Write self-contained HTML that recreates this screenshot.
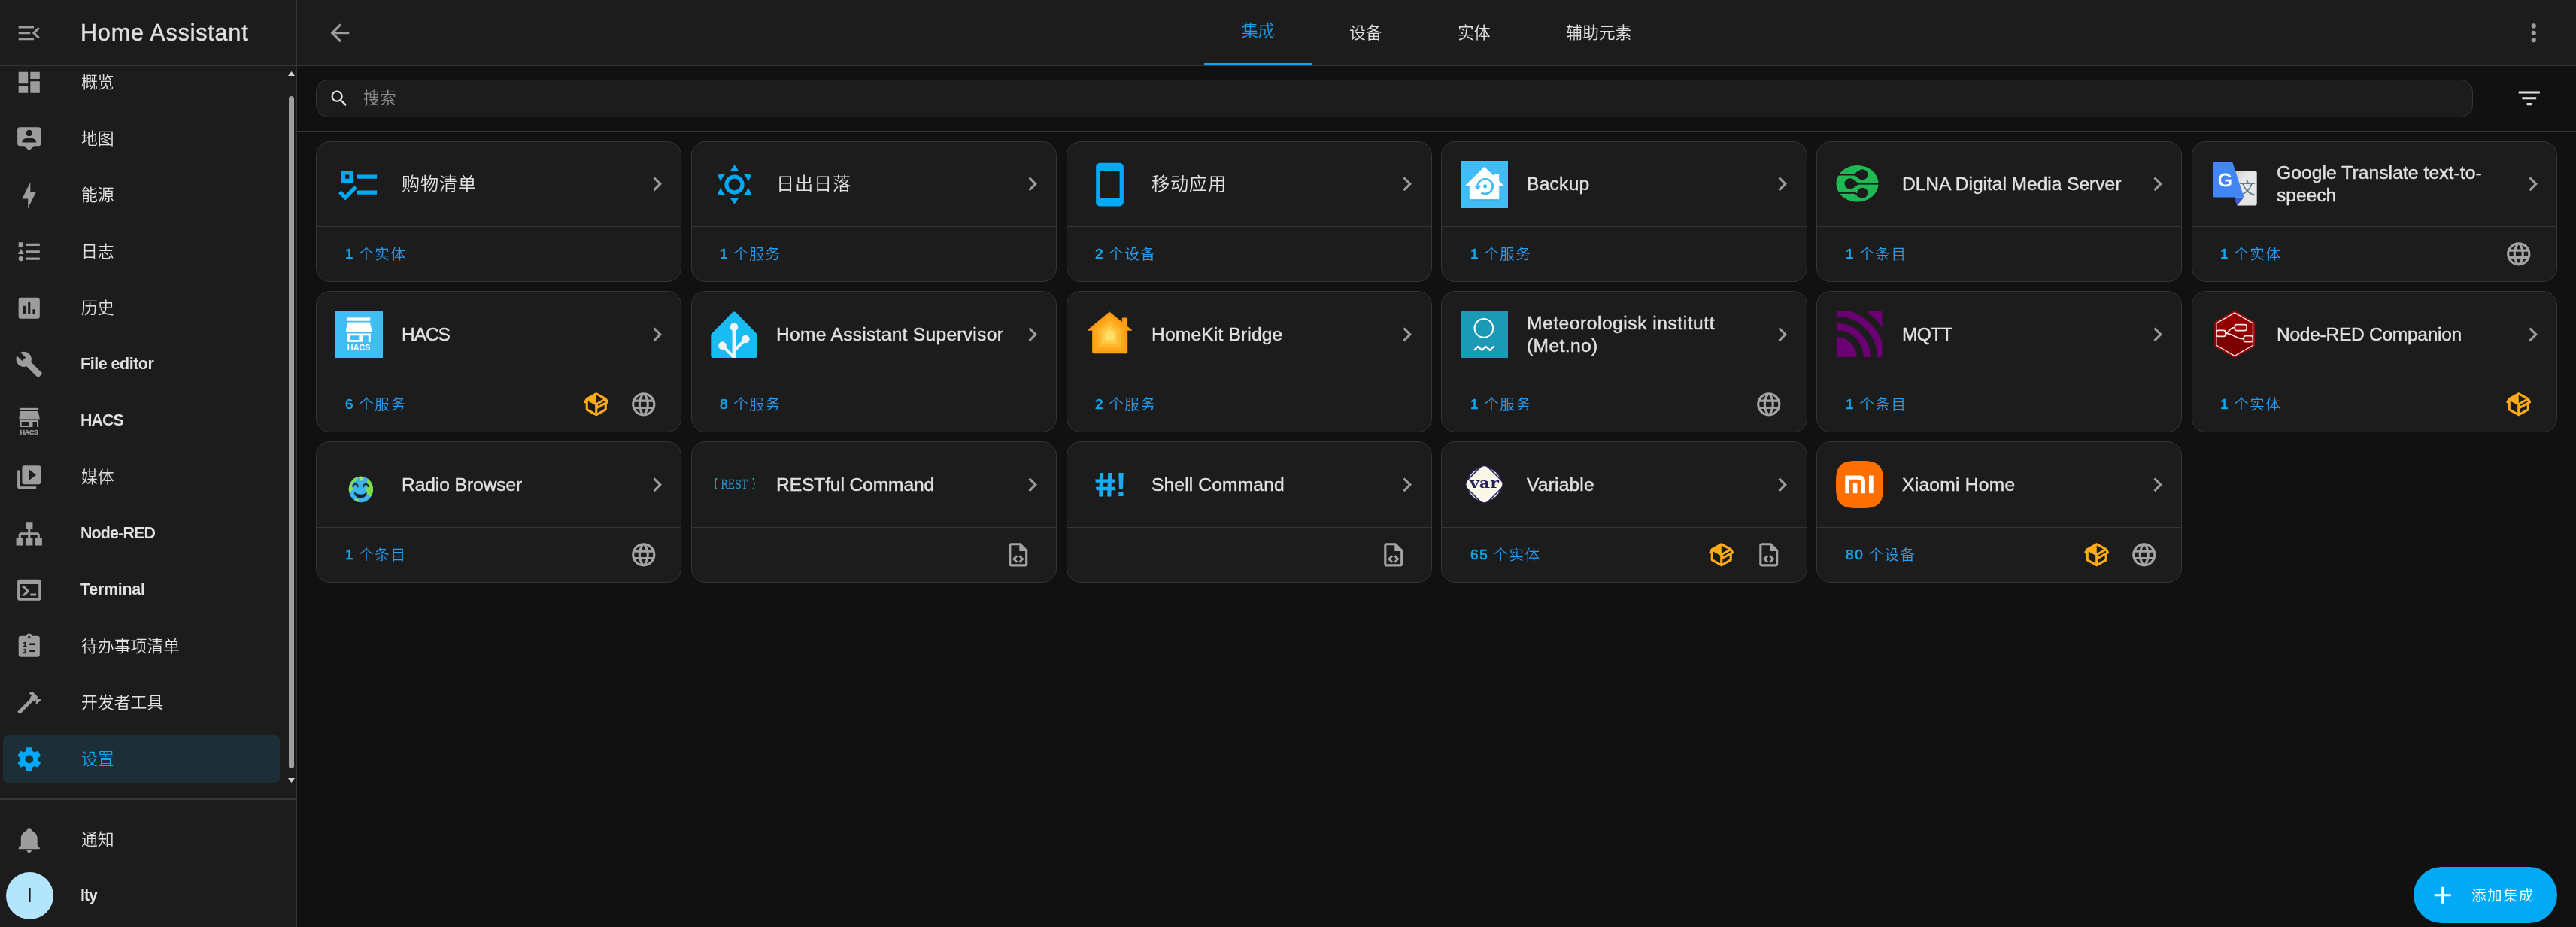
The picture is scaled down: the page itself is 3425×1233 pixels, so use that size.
<!DOCTYPE html><html lang="zh-CN"><head><meta charset="utf-8"><title>Home Assistant</title><style>
*{box-sizing:border-box;margin:0;padding:0}
html,body{width:3425px;height:1233px;overflow:hidden;background:#111111}
body{font-family:"Liberation Sans", "Noto Sans CJK SC", sans-serif;color:#e1e1e1;position:relative;font-weight:400}
.ic{position:absolute;display:block}
.lg{position:absolute;display:block;left:0;top:0}
.abs{position:absolute}
.ttl,.sbi,.cnt,.tab,.title,.ph,#fab span,.av,.logo,svg.tx{will-change:transform}
.cj{font-weight:350}
.md{-webkit-text-stroke:0.55px currentColor}
#sidebar{position:absolute;left:0;top:0;width:395px;height:1233px;background:#1c1c1c;border-right:1px solid #353535}
#sbhead{position:absolute;left:0;top:0;width:394px;height:88px;border-bottom:1px solid #353535}
.title{-webkit-text-stroke:0.4px currentColor;position:absolute;left:106.6px;top:0;height:87px;line-height:87px;font-size:30.6px;white-space:nowrap;color:#e1e1e1}
.sbi.b{font-weight:700;font-size:21.4px;margin-left:-0.7px}
.sbi{position:absolute;left:107.5px;height:62px;line-height:62px;font-size:21.875px;white-space:nowrap;color:#e1e1e1}
.sel{position:absolute;left:4px;top:978px;width:368px;height:63px;border-radius:6px;background:#1c2e36}
#header{position:absolute;left:395px;top:0;width:3030px;height:88px;background:#1c1c1c;border-bottom:1px solid #353535}
.tab{position:absolute;top:0;height:87px;line-height:87.6px;text-align:center;font-size:21.875px;color:#e1e1e1;white-space:nowrap}
.tab.act{color:#1b9fea;line-height:82.4px}
.tab.act:after{content:"";position:absolute;left:0;right:0.9px;bottom:0;height:3px;background:#0ca6f0}
#search{position:absolute;left:420px;top:106px;width:2868px;height:50px;border:1px solid #353535;border-radius:16px;background:#1c1c1c}
.ph{position:absolute;left:483px;top:107.2px;height:50px;line-height:48px;font-size:21.875px;color:#8c8c8c}
#hr{position:absolute;left:395px;top:174px;width:3030px;height:1px;background:#353535}
.card{position:absolute;border:1px solid #353535;border-radius:18.75px;background:#1c1c1c}
.div{position:absolute;height:1px;background:#353535}
.logo{position:absolute;width:63px;height:63px}
.ttl{position:absolute;font-size:24.6px;line-height:37.5px;height:37.5px;color:#e1e1e1;white-space:nowrap;-webkit-text-stroke:0.4px currentColor}
.ttl.cj{-webkit-text-stroke:0;font-size:24.2px;letter-spacing:0.8px}
.cnt{position:absolute;height:36px;line-height:36px;font-size:19.5px;letter-spacing:1.6px;word-spacing:-1px;color:#2a9cf0;white-space:nowrap}
.cnt .n{color:#12a8ee;font-size:19px;-webkit-text-stroke:0.65px currentColor;position:relative;top:-1px}
.cnt .u{position:relative;top:-0.3px}
#fab{position:absolute;left:3209px;top:1153px;width:191px;height:75px;border-radius:38px;background:#03a9f4}
#fab span{position:absolute;left:76.6px;top:1.4px;height:75px;line-height:75px;font-size:19.5px;letter-spacing:1.45px;color:#fff;white-space:nowrap}
</style></head><body>
<div id="sidebar">
<div id="sbhead">
<svg class="ic" style="left:19.75px;top:24.75px;width:37.5px;height:37.5px;" viewBox="0 0 24 24"><path fill="#9d9d9d" d="M21,15.61L19.59,17L14.58,12L19.59,7L21,8.39L17.44,12L21,15.61M3,6H16V8H3V6M3,13V11H13V13H3M3,18V16H16V18H3Z"/></svg>
<div class="title" style="letter-spacing:0.778px">Home Assistant</div>
</div>
<div class="sel"></div>
<svg class="ic" style="left:19.75px;top:90.85px;width:37.5px;height:37.5px;" viewBox="0 0 24 24"><path fill="#9d9d9d" d="M13,3V9H21V3M13,21H21V11H13M3,21H11V15H3M3,13H11V3H3V13Z"/></svg>
<div class="sbi cj" style="top:78.60px;">概览</div>
<svg class="ic" style="left:19.75px;top:165.85px;width:37.5px;height:37.5px;" viewBox="0 0 24 24"><path fill="#9d9d9d" d="M20,2H4A2,2 0 0,0 2,4V16A2,2 0 0,0 4,18H8L12,22L16,18H20A2,2 0 0,0 22,16V4A2,2 0 0,0 20,2M12,4.3C13.5,4.3 14.7,5.5 14.7,7C14.7,8.5 13.5,9.7 12,9.7C10.5,9.7 9.3,8.5 9.3,7C9.3,5.5 10.5,4.3 12,4.3M18,15H6V14.1C6,12.1 10,11 12,11C14,11 18,12.1 18,14.1V15Z"/></svg>
<div class="sbi cj" style="top:153.60px;">地图</div>
<svg class="ic" style="left:19.75px;top:240.85px;width:37.5px;height:37.5px;" viewBox="0 0 24 24"><path fill="#9d9d9d" d="M11,15H6L13,1V9H18L11,23V15Z"/></svg>
<div class="sbi cj" style="top:228.60px;">能源</div>
<svg class="ic" style="left:19.75px;top:315.85px;width:37.5px;height:37.5px;" viewBox="0 0 24 24"><path fill="#9d9d9d" d="M5,9.5L7.5,14H2.5L5,9.5M3,4H7V8H3V4M5,20A2,2 0 0,0 7,18A2,2 0 0,0 5,16A2,2 0 0,0 3,18A2,2 0 0,0 5,20M9,5V7H21V5H9M9,19H21V17H9V19M9,13H21V11H9V13Z"/></svg>
<div class="sbi cj" style="top:303.60px;">日志</div>
<svg class="ic" style="left:19.75px;top:390.85px;width:37.5px;height:37.5px;" viewBox="0 0 24 24"><path fill="#9d9d9d" d="M17,17H15V13H17M13,17H11V7H13M9,17H7V10H9M19,3H5C3.89,3 3,3.89 3,5V19A2,2 0 0,0 5,21H19A2,2 0 0,0 21,19V5C21,3.89 20.1,3 19,3Z"/></svg>
<div class="sbi cj" style="top:378.60px;">历史</div>
<svg class="ic" style="left:19.75px;top:465.85px;width:37.5px;height:37.5px;" viewBox="0 0 24 24"><path fill="#9d9d9d" d="M22.7,19L13.6,9.9C14.5,7.6 14,4.9 12.1,3C10.1,1 7.1,0.6 4.7,1.7L9,6L6,9L1.6,4.7C0.4,7.1 0.9,10.1 2.9,12.1C4.8,14 7.5,14.5 9.8,13.6L18.9,22.7C19.3,23.1 19.9,23.1 20.3,22.7L22.6,20.4C23.1,20 23.1,19.3 22.7,19Z"/></svg>
<div class="sbi b" style="top:453.00px;letter-spacing:-0.439px;">File editor</div>
<svg class="ic tx" style="left:18.5px;top:539.6px;width:40px;height:40px" viewBox="0 0 40 40"><rect x="7.5" y="2.8" width="24.6" height="3.2" fill="#9d9d9d"/><path d="M8.1 6.9 H31.5 L33.6 15 V17.4 H6.4 V15 Z" fill="#9d9d9d"/><path d="M7.5 19 H32.1 V28.1 H30 V21 H24.5 V28.1 H7.5 Z M9.6 21 V26 H19.4 V21 Z" fill="#9d9d9d" fill-rule="evenodd"/><text x="7.4" y="37.7" font-family="Liberation Sans, sans-serif" font-weight="700" font-size="9.2" fill="#9d9d9d" stroke="#9d9d9d" stroke-width="0.3" textLength="24.8" lengthAdjust="spacing">HACS</text></svg>
<div class="sbi b" style="top:528.00px;letter-spacing:-0.941px;">HACS</div>
<svg class="ic" style="left:19.75px;top:615.85px;width:37.5px;height:37.5px;" viewBox="0 0 24 24"><path fill="#9d9d9d" d="M4,6H2V20A2,2 0 0,0 4,22H18V20H4V6M20,2H8A2,2 0 0,0 6,4V16A2,2 0 0,0 8,18H20A2,2 0 0,0 22,16V4A2,2 0 0,0 20,2M12,14.5V5.5L18,10L12,14.5Z"/></svg>
<div class="sbi cj" style="top:603.60px;">媒体</div>
<svg class="ic" style="left:19.75px;top:690.85px;width:37.5px;height:37.5px;" viewBox="0 0 24 24"><path fill="#9d9d9d" d="M9,2V8H11V11H5C3.89,11 3,11.89 3,13V16H1V22H7V16H5V13H11V16H9V22H15V16H13V13H19V16H17V22H23V16H21V13C21,11.89 20.11,11 19,11H13V8H15V2H9Z"/></svg>
<div class="sbi b" style="top:678.00px;letter-spacing:-0.831px;">Node-RED</div>
<svg class="ic" style="left:19.75px;top:765.85px;width:37.5px;height:37.5px;" viewBox="0 0 24 24"><path fill="#9d9d9d" d="M20,19V7H4V19H20M20,3A2,2 0 0,1 22,5V19A2,2 0 0,1 20,21H4A2,2 0 0,1 2,19V5C2,3.89 2.9,3 4,3H20M13,17V15H18V17H13M9.58,13L5.57,9H8.4L11.7,12.3C12.09,12.69 12.09,13.33 11.7,13.72L8.42,17H5.59L9.58,13Z"/></svg>
<div class="sbi b" style="top:753.00px;letter-spacing:-0.235px;">Terminal</div>
<svg class="ic tx" style="left:19.75px;top:840.85px;width:37.5px;height:37.5px" viewBox="0 0 24 24"><path d="M19,3H14.82C14.4,1.84 13.3,1 12,1C10.7,1 9.6,1.84 9.18,3H5A2,2 0 0,0 3,5V19A2,2 0 0,0 5,21H19A2,2 0 0,0 21,19V5A2,2 0 0,0 19,3Z" fill="#9d9d9d"/><circle cx="12" cy="4" r="1" fill="#1c1c1c"/><rect x="12.3" y="9.2" width="4.7" height="1.7" fill="#1c1c1c"/><rect x="12.3" y="15" width="4.7" height="1.7" fill="#1c1c1c"/><text x="6.9" y="11.9" font-family="Liberation Sans, sans-serif" font-weight="700" font-size="5.4" fill="#1c1c1c" stroke="#1c1c1c" stroke-width="0.25">1</text><text x="6.9" y="17.8" font-family="Liberation Sans, sans-serif" font-weight="700" font-size="5.4" fill="#1c1c1c" stroke="#1c1c1c" stroke-width="0.25">2</text></svg>
<div class="sbi cj" style="top:828.60px;">待办事项清单</div>
<svg class="ic" style="left:19.75px;top:915.85px;width:37.5px;height:37.5px;" viewBox="0 0 24 24"><path fill="#9d9d9d" d="M2,19.63L13.43,8.2L12.72,7.5L14.14,6.07L12,3.89C13.2,2.7 15.09,2.7 16.27,3.89L19.87,7.5L18.45,8.91H21.29L22,9.62L18.45,13.21L17.74,12.5V9.62L16.27,11.04L15.56,10.33L4.13,21.76L2,19.63Z"/></svg>
<div class="sbi cj" style="top:903.60px;">开发者工具</div>
<svg class="ic" style="left:19.75px;top:990.85px;width:37.5px;height:37.5px;" viewBox="0 0 24 24"><path fill="#03a9f4" d="M12,15.5A3.5,3.5 0 0,1 8.5,12A3.5,3.5 0 0,1 12,8.5A3.5,3.5 0 0,1 15.5,12A3.5,3.5 0 0,1 12,15.5M19.43,12.97C19.47,12.65 19.5,12.33 19.5,12C19.5,11.67 19.47,11.34 19.43,11L21.54,9.37C21.73,9.22 21.78,8.95 21.66,8.73L19.66,5.27C19.54,5.05 19.27,4.96 19.05,5.05L16.56,6.05C16.04,5.66 15.5,5.32 14.87,5.07L14.5,2.42C14.46,2.18 14.25,2 14,2H10C9.75,2 9.54,2.18 9.5,2.42L9.13,5.07C8.5,5.32 7.96,5.66 7.44,6.05L4.95,5.05C4.73,4.96 4.46,5.05 4.34,5.27L2.34,8.73C2.21,8.95 2.27,9.22 2.46,9.37L4.57,11C4.53,11.34 4.5,11.67 4.5,12C4.5,12.33 4.53,12.65 4.57,12.97L2.46,14.63C2.27,14.78 2.21,15.05 2.34,15.27L4.34,18.73C4.46,18.95 4.73,19.03 4.95,18.95L7.44,17.94C7.96,18.34 8.5,18.68 9.13,18.93L9.5,21.58C9.54,21.82 9.75,22 10,22H14C14.25,22 14.46,21.82 14.5,21.58L14.87,18.93C15.5,18.67 16.04,18.34 16.56,17.94L19.05,18.95C19.27,19.03 19.54,18.95 19.66,18.73L21.66,15.27C21.78,15.05 21.73,14.78 21.54,14.63L19.43,12.97Z"/></svg>
<div class="sbi cj" style="top:978.60px;color:#03a9f4;">设置</div>
<div class="abs" style="left:384px;top:128px;width:7px;height:894px;border-radius:4px;background:#9f9f9f"></div>
<svg class="ic" style="left:382px;top:94px;width:11px;height:8px" viewBox="0 0 11 8"><path fill="#d0d0d0" d="M5.5 1 L10 7 H1 Z"/></svg>
<svg class="ic" style="left:382px;top:1034px;width:11px;height:8px" viewBox="0 0 11 8"><path fill="#d0d0d0" d="M1 1 H10 L5.5 7 Z"/></svg>
<div class="abs" style="left:0;top:1062px;width:394px;height:2px;background:#353535"></div>
<svg class="ic" style="left:19.75px;top:1098.25px;width:37.5px;height:37.5px;" viewBox="0 0 24 24"><path fill="#9d9d9d" d="M21,19V20H3V19L5,17V11C5,7.9 7.03,5.17 10,4.29C10,4.19 10,4.1 10,4A2,2 0 0,1 12,2A2,2 0 0,1 14,4C14,4.1 14,4.19 14,4.29C16.97,5.17 19,7.9 19,11V17L21,19M14,21A2,2 0 0,1 12,23A2,2 0 0,1 10,21"/></svg>
<div class="sbi cj" style="top:1086px">通知</div>
<div class="abs av" style="left:8px;top:1160px;width:63px;height:63px;border-radius:50%;background:#b3e5fc;color:#1c1c1c;text-align:center;line-height:63px;font-size:25px">l</div>
<div class="sbi b" style="top:1159.6px;letter-spacing:-1.003px">lty</div>
</div>
<div id="header">
<svg class="ic" style="left:37.75px;top:24.75px;width:37.5px;height:37.5px;" viewBox="0 0 24 24"><path fill="#9d9d9d" d="M20,11V13H8L13.5,18.5L12.08,19.92L4.16,12L12.08,4.08L13.5,5.5L8,11H20Z"/></svg>
<div class="tab cj act" style="left:1205.60px;width:143.75px">集成</div>
<div class="tab cj" style="left:1349.40px;width:143.75px">设备</div>
<div class="tab cj" style="left:1493.10px;width:143.75px">实体</div>
<div class="tab cj" style="left:1636.90px;width:187.5px">辅助元素</div>
<svg class="ic" style="left:2954.95px;top:24.75px;width:37.5px;height:37.5px;" viewBox="0 0 24 24"><path fill="#9d9d9d" d="M12,16A2,2 0 0,1 14,18A2,2 0 0,1 12,20A2,2 0 0,1 10,18A2,2 0 0,1 12,16M12,10A2,2 0 0,1 14,12A2,2 0 0,1 12,14A2,2 0 0,1 10,12A2,2 0 0,1 12,10M12,4A2,2 0 0,1 14,6A2,2 0 0,1 12,8A2,2 0 0,1 10,6A2,2 0 0,1 12,4Z"/></svg>
</div>
<div id="search"></div>
<svg class="ic" style="left:437.04px;top:116.74px;width:28.125px;height:28.125px;" viewBox="0 0 24 24"><path fill="#e1e1e1" d="M9.5,3A6.5,6.5 0 0,1 16,9.5C16,11.11 15.41,12.59 14.44,13.73L14.71,14H15.5L20.5,19L19,20.5L14,15.5V14.71L13.73,14.44C12.59,15.41 11.11,16 9.5,16A6.5,6.5 0 0,1 3,9.5A6.5,6.5 0 0,1 9.5,3M9.5,5C7,5 5,7 5,9.5C5,12 7,14 9.5,14C12,14 14,12 14,9.5C14,7 12,5 9.5,5Z"/></svg>
<div class="ph cj">搜索</div>
<svg class="ic" style="left:3343.95px;top:111.75px;width:37.5px;height:37.5px;" viewBox="0 0 24 24"><path fill="#e1e1e1" d="M6,13H18V11H6M3,6V8H21V6M10,18H14V16H10V18Z"/></svg>
<div id="hr"></div>
<div class="card" style="left:420px;top:188px;width:486px;height:187px"></div>
<div class="div" style="left:421px;top:301px;width:484px"></div>
<div class="logo" style="left:446px;top:214px;height:62px"><svg class="lg" width="63" height="63" viewBox="0 0 24 24" style="top:-0.4px"><path fill="#03a9f4" d="M3,5H9V11H3V5M5,7V9H7V7H5M11,7H21V9H11V7M11,15H21V17H11V15M5,20L1.5,16.5L2.91,15.09L5,17.17L9.59,12.59L11,14L5,20Z"/></svg></div>
<div class="ttl cj" style="left:533.60px;top:226.30px">购物清单</div>
<svg class="ic" style="left:854.80px;top:226.05px;width:37.5px;height:37.5px;" viewBox="0 0 24 24"><path fill="#9b9b9b" d="M8.59,16.58L13.17,12L8.59,7.41L10,6L16,12L10,18L8.59,16.58Z"/></svg>
<div class="cnt cj" style="left:458.60px;top:319.50px"><span class="n">1</span> <span class="u">个实体</span></div>
<div class="card" style="left:919px;top:188px;width:486px;height:187px"></div>
<div class="div" style="left:920px;top:301px;width:484px"></div>
<div class="logo" style="left:945px;top:214px;height:62px"><svg class="lg" width="63" height="63" viewBox="0 0 24 24" style="top:-0.4px"><path fill="#03a9f4" d="M12,7A5,5 0 0,1 17,12A5,5 0 0,1 12,17A5,5 0 0,1 7,12A5,5 0 0,1 12,7M12,9A3,3 0 0,0 9,12A3,3 0 0,0 12,15A3,3 0 0,0 15,12A3,3 0 0,0 12,9M12,2L14.39,5.42C13.65,5.15 12.84,5 12,5C11.16,5 10.35,5.15 9.61,5.42L12,2M3.34,7L7.5,6.65C6.9,7.16 6.36,7.78 5.94,8.5C5.5,9.24 5.25,10 5.11,10.79L3.34,7M3.36,17L5.12,13.23C5.26,14 5.53,14.78 5.95,15.5C6.37,16.24 6.91,16.86 7.5,17.37L3.36,17M20.65,7L18.88,10.79C18.74,10 18.47,9.23 18.05,8.5C17.63,7.78 17.1,7.15 16.5,6.64L20.65,7M20.64,17L16.5,17.36C17.09,16.85 17.62,16.22 18.04,15.5C18.46,14.77 18.73,14 18.87,13.21L20.64,17M12,22L9.59,18.56C10.33,18.83 11.14,19 12,19C12.82,19 13.63,18.83 14.37,18.56L12,22Z"/></svg></div>
<div class="ttl cj" style="left:1032.35px;top:226.30px">日出日落</div>
<svg class="ic" style="left:1353.55px;top:226.05px;width:37.5px;height:37.5px;" viewBox="0 0 24 24"><path fill="#9b9b9b" d="M8.59,16.58L13.17,12L8.59,7.41L10,6L16,12L10,18L8.59,16.58Z"/></svg>
<div class="cnt cj" style="left:957.35px;top:319.50px"><span class="n">1</span> <span class="u">个服务</span></div>
<div class="card" style="left:1418px;top:188px;width:486px;height:187px"></div>
<div class="div" style="left:1419px;top:301px;width:484px"></div>
<div class="logo" style="left:1444px;top:214px;height:62px"><svg class="lg" width="63" height="63" viewBox="0 0 24 24" style="top:-0.4px"><path fill="#03a9f4" d="M17,19H7V5H17M17,1H7C5.89,1 5,1.89 5,3V21A2,2 0 0,0 7,23H17A2,2 0 0,0 19,21V3C19,1.89 18.1,1 17,1Z"/></svg></div>
<div class="ttl cj" style="left:1531.10px;top:226.30px">移动应用</div>
<svg class="ic" style="left:1852.30px;top:226.05px;width:37.5px;height:37.5px;" viewBox="0 0 24 24"><path fill="#9b9b9b" d="M8.59,16.58L13.17,12L8.59,7.41L10,6L16,12L10,18L8.59,16.58Z"/></svg>
<div class="cnt cj" style="left:1456.10px;top:319.50px"><span class="n">2</span> <span class="u">个设备</span></div>
<div class="card" style="left:1916px;top:188px;width:487px;height:187px"></div>
<div class="div" style="left:1917px;top:301px;width:485px"></div>
<div class="logo" style="left:1942px;top:214px;height:62px"><svg class="lg" width="100%" height="100%" preserveAspectRatio="none" viewBox="0 0 63.5 63.5" style="overflow:visible;"><rect width="63.5" height="63.5" fill="#41bdf5"/><path d="M32 8.9 L45.4 22.2 V18.2 H51.1 V27.9 L56.8 33.6 H51.1 V52 H12.5 V33.6 H7 Z" fill="#2fa3d9" transform="translate(0,1.2)" stroke="#2fa3d9" stroke-width="1.2" stroke-linejoin="round"/><path d="M32 8.9 L45.4 22.2 V18.2 H51.1 V27.9 L56.8 33.6 H51.1 V52 H12.5 V33.6 H7 Z" fill="#ffffff" stroke="#ffffff" stroke-width="1.2" stroke-linejoin="round"/><path d="M22.9 35.6 A10.1 10.1 0 1 1 27.6 43.4" fill="none" stroke="#41bdf5" stroke-width="2.8"/><path d="M18.2 34.4 H27.6 L22.9 39.8 Z" fill="#41bdf5"/><circle cx="32.9" cy="34.6" r="2.6" fill="#41bdf5"/></svg></div>
<div class="ttl" style="left:2029.85px;top:225.60px;letter-spacing:0.245px">Backup</div>
<svg class="ic" style="left:2351.05px;top:226.05px;width:37.5px;height:37.5px;" viewBox="0 0 24 24"><path fill="#9b9b9b" d="M8.59,16.58L13.17,12L8.59,7.41L10,6L16,12L10,18L8.59,16.58Z"/></svg>
<div class="cnt cj" style="left:1954.85px;top:319.50px"><span class="n">1</span> <span class="u">个服务</span></div>
<div class="card" style="left:2415px;top:188px;width:486px;height:187px"></div>
<div class="div" style="left:2416px;top:301px;width:484px"></div>
<div class="logo" style="left:2441px;top:214px;height:62px"><svg class="lg" width="100%" height="100%" preserveAspectRatio="none" viewBox="0 0 63.5 63.5" style="overflow:visible;"><ellipse cx="28.7" cy="31" rx="28.3" ry="24.9" fill="#1eb954"/><path d="M-1 18.7 H25" stroke="#1c1c1c" stroke-width="2.6"/><path d="M24 17.4 C27 17.4 28 14 30 12.5 L33 25 C29 24 27.5 20 24 20 Z" fill="#1c1c1c"/><circle cx="35.6" cy="18.6" r="7.2" fill="#1c1c1c"/><path d="M30 31.1 H58" stroke="#1c1c1c" stroke-width="2.6"/><path d="M31 29.8 C28 29.8 26.5 27 24.5 25.5 L24.5 36.8 C26.5 35.3 28 32.4 31 32.4 Z" fill="#1c1c1c"/><circle cx="19" cy="31.1" r="7.4" fill="#1c1c1c"/><path d="M-1 43.6 H25" stroke="#1c1c1c" stroke-width="2.6"/><path d="M24 42.3 C27.5 42.3 29 46 33 47 L30 50 C28 48 27 44.9 24 44.9 Z" fill="#1c1c1c"/><circle cx="35.6" cy="43.8" r="7.2" fill="#1c1c1c"/></svg></div>
<div class="ttl" style="left:2528.60px;top:225.60px;letter-spacing:-0.049px">DLNA Digital Media Server</div>
<svg class="ic" style="left:2849.80px;top:226.05px;width:37.5px;height:37.5px;" viewBox="0 0 24 24"><path fill="#9b9b9b" d="M8.59,16.58L13.17,12L8.59,7.41L10,6L16,12L10,18L8.59,16.58Z"/></svg>
<div class="cnt cj" style="left:2453.60px;top:319.50px"><span class="n">1</span> <span class="u">个条目</span></div>
<div class="card" style="left:2914px;top:188px;width:486px;height:187px"></div>
<div class="div" style="left:2915px;top:301px;width:484px"></div>
<div class="logo" style="left:2940px;top:214px;height:62px"><svg class="lg" width="100%" height="100%" preserveAspectRatio="none" viewBox="0 0 63.5 63.5" style="overflow:visible;"><defs><linearGradient id="gtg" x1="0" y1="0" x2="1" y2="1"><stop offset="0" stop-color="#c9c9c9"/><stop offset="0.35" stop-color="#e8e8e8"/><stop offset="1" stop-color="#e4e4e4"/></linearGradient></defs><path d="M30 13.4 H58.2 A3 3 0 0 1 61.2 16.4 V58 A3 3 0 0 1 58.2 61 H34.7 Z" fill="url(#gtg)"/><text x="48.2" y="44.6" font-family="Noto Sans CJK SC, sans-serif" font-weight="400" font-size="22.5" fill="#5f7f8c" text-anchor="middle">文</text><path d="M30.3 49.8 H43.9 L34.7 61 Z" fill="#3a5bc7"/><path d="M5.1 1.3 H28.3 L43.9 49.8 H5.1 A3 3 0 0 1 2.1 46.8 V4.3 A3 3 0 0 1 5.1 1.3 Z" fill="#4285f4"/><text x="18.6" y="34.4" font-family="Liberation Sans, sans-serif" font-weight="400" font-size="24.5" fill="#ffffff" stroke="#ffffff" stroke-width="0.9" text-anchor="middle">G</text></svg></div>
<div class="ttl" style="left:3027.35px;top:210.75px;letter-spacing:0.081px">Google Translate text-to-</div>
<div class="ttl" style="left:3027.35px;top:241.25px;letter-spacing:-0.037px">speech</div>
<svg class="ic" style="left:3348.55px;top:226.05px;width:37.5px;height:37.5px;" viewBox="0 0 24 24"><path fill="#9b9b9b" d="M8.59,16.58L13.17,12L8.59,7.41L10,6L16,12L10,18L8.59,16.58Z"/></svg>
<div class="cnt cj" style="left:2952.35px;top:319.50px"><span class="n">1</span> <span class="u">个实体</span></div>
<svg class="ic" style="left:3330.25px;top:318.55px;width:37.5px;height:37.5px;" viewBox="0 0 24 24"><path fill="#a3a3a3" d="M16.36,14C16.44,13.34 16.5,12.68 16.5,12C16.5,11.32 16.44,10.66 16.36,10H19.74C19.9,10.64 20,11.31 20,12C20,12.69 19.9,13.36 19.74,14M14.59,19.56C15.19,18.45 15.65,17.25 15.97,16H18.92C17.96,17.65 16.43,18.93 14.59,19.56M14.34,14H9.66C9.56,13.34 9.5,12.68 9.5,12C9.5,11.32 9.56,10.65 9.66,10H14.34C14.43,10.65 14.5,11.32 14.5,12C14.5,12.68 14.43,13.34 14.34,14M12,19.96C11.17,18.76 10.5,17.43 10.09,16H13.91C13.5,17.43 12.83,18.76 12,19.96M8,8H5.08C6.03,6.34 7.57,5.06 9.4,4.44C8.8,5.55 8.35,6.75 8,8M5.08,16H8C8.35,17.25 8.8,18.45 9.4,19.56C7.57,18.93 6.03,17.65 5.08,16M4.26,14C4.1,13.36 4,12.69 4,12C4,11.31 4.1,10.64 4.26,10H7.64C7.56,10.66 7.5,11.32 7.5,12C7.5,12.68 7.56,13.34 7.64,14M12,4.03C12.83,5.23 13.5,6.57 13.91,8H10.09C10.5,6.57 11.17,5.23 12,4.03M18.92,8H15.97C15.65,6.75 15.19,5.55 14.59,4.44C16.43,5.07 17.96,6.34 18.92,8M12,2C6.47,2 2,6.5 2,12A10,10 0 0,0 12,22A10,10 0 0,0 22,12A10,10 0 0,0 12,2Z"/></svg>
<div class="card" style="left:420px;top:387px;width:486px;height:188px"></div>
<div class="div" style="left:421px;top:501px;width:484px"></div>
<div class="logo" style="left:446px;top:413px;height:63px"><svg class="lg" width="100%" height="100%" preserveAspectRatio="none" viewBox="0 0 63.5 63.5" style="overflow:visible;"><rect width="63.5" height="63.5" fill="#41bdf5"/><rect x="16" y="9.4" width="30.6" height="4.4" fill="#fff"/><path d="M16.5 15.7 H46.1 L48.5 25 V28.4 H14.3 V25 Z" fill="#fff"/><path d="M16.2 30.8 H47.1 V42 H44.1 V33.6 H36.9 V42 H16.2 Z M19.1 33.6 V39.2 H31.6 V33.6 Z" fill="#fff" fill-rule="evenodd"/><text x="16" y="53.7" font-family="Liberation Sans, sans-serif" font-weight="700" font-size="11.6" fill="#fff" textLength="30.9" lengthAdjust="spacingAndGlyphs">HACS</text></svg></div>
<div class="ttl" style="left:533.60px;top:425.60px;letter-spacing:-1.108px">HACS</div>
<svg class="ic" style="left:854.80px;top:426.05px;width:37.5px;height:37.5px;" viewBox="0 0 24 24"><path fill="#9b9b9b" d="M8.59,16.58L13.17,12L8.59,7.41L10,6L16,12L10,18L8.59,16.58Z"/></svg>
<div class="cnt cj" style="left:458.60px;top:519.50px"><span class="n">6</span> <span class="u">个服务</span></div>
<svg class="ic" style="left:836.50px;top:518.55px;width:37.5px;height:37.5px;" viewBox="0 0 24 24"><path fill="#a3a3a3" d="M16.36,14C16.44,13.34 16.5,12.68 16.5,12C16.5,11.32 16.44,10.66 16.36,10H19.74C19.9,10.64 20,11.31 20,12C20,12.69 19.9,13.36 19.74,14M14.59,19.56C15.19,18.45 15.65,17.25 15.97,16H18.92C17.96,17.65 16.43,18.93 14.59,19.56M14.34,14H9.66C9.56,13.34 9.5,12.68 9.5,12C9.5,11.32 9.56,10.65 9.66,10H14.34C14.43,10.65 14.5,11.32 14.5,12C14.5,12.68 14.43,13.34 14.34,14M12,19.96C11.17,18.76 10.5,17.43 10.09,16H13.91C13.5,17.43 12.83,18.76 12,19.96M8,8H5.08C6.03,6.34 7.57,5.06 9.4,4.44C8.8,5.55 8.35,6.75 8,8M5.08,16H8C8.35,17.25 8.8,18.45 9.4,19.56C7.57,18.93 6.03,17.65 5.08,16M4.26,14C4.1,13.36 4,12.69 4,12C4,11.31 4.1,10.64 4.26,10H7.64C7.56,10.66 7.5,11.32 7.5,12C7.5,12.68 7.56,13.34 7.64,14M12,4.03C12.83,5.23 13.5,6.57 13.91,8H10.09C10.5,6.57 11.17,5.23 12,4.03M18.92,8H15.97C15.65,6.75 15.19,5.55 14.59,4.44C16.43,5.07 17.96,6.34 18.92,8M12,2C6.47,2 2,6.5 2,12A10,10 0 0,0 12,22A10,10 0 0,0 22,12A10,10 0 0,0 12,2Z"/></svg>
<svg class="ic" style="left:773.50px;top:518.55px;width:37.5px;height:37.5px;" viewBox="0 0 24 24"><path fill="#fdab16" d="M2,10.96C1.5,10.68 1.35,10.07 1.63,9.59L3.13,7C3.24,6.8 3.41,6.66 3.6,6.58L11.43,2.18C11.59,2.06 11.79,2 12,2C12.21,2 12.41,2.06 12.57,2.18L20.47,6.62C20.66,6.72 20.82,6.88 20.91,7.08L22.36,9.6C22.64,10.08 22.47,10.69 22,10.96L21,11.54V16.5C21,16.88 20.79,17.21 20.47,17.38L12.57,21.82C12.41,21.94 12.21,22 12,22C11.79,22 11.59,21.94 11.43,21.82L3.53,17.38C3.21,17.21 3,16.88 3,16.5V10.96C2.7,11.13 2.32,11.14 2,10.96M12,4.15V4.15L12,10.85V10.85L17.96,7.5L12,4.15M5,15.91L11,19.29V12.58L5,9.21V15.91M19,15.91V12.69L14,15.59C13.67,15.77 13.3,15.76 13,15.6V19.29L19,15.91M13.85,13.36L20.13,9.73L19.55,8.72L13.27,12.35L13.85,13.36Z"/></svg>
<div class="card" style="left:919px;top:387px;width:486px;height:188px"></div>
<div class="div" style="left:920px;top:501px;width:484px"></div>
<div class="logo" style="left:945px;top:413px;height:63px"><svg class="lg" width="100%" height="100%" preserveAspectRatio="none" viewBox="0 0 63.5 63.5" style="overflow:visible;"><path d="M28.9 2.6 L1.8 30.2 A5 5 0 0 0 0.3 33.8 V60.4 A3 3 0 0 0 3.3 63.4 H59.4 A3 3 0 0 0 62.4 60.4 V33.8 A5 5 0 0 0 60.9 30.2 L33.9 2.6 A3.4 3.4 0 0 0 28.9 2.6 Z" fill="#18bcf2"/><path d="M31.2 21.9 V63.4" stroke="#f2f4f9" stroke-width="4.8"/><path d="M46.7 38.3 L31.4 54" stroke="#f2f4f9" stroke-width="4"/><path d="M15.6 47.1 L31 62.6" stroke="#f2f4f9" stroke-width="4"/><circle cx="31.2" cy="21.9" r="5.4" fill="#f2f4f9"/><circle cx="46.7" cy="38.3" r="5.4" fill="#f2f4f9"/><circle cx="15.6" cy="47.1" r="5.4" fill="#f2f4f9"/></svg></div>
<div class="ttl" style="left:1032.35px;top:425.60px;letter-spacing:0.274px">Home Assistant Supervisor</div>
<svg class="ic" style="left:1353.55px;top:426.05px;width:37.5px;height:37.5px;" viewBox="0 0 24 24"><path fill="#9b9b9b" d="M8.59,16.58L13.17,12L8.59,7.41L10,6L16,12L10,18L8.59,16.58Z"/></svg>
<div class="cnt cj" style="left:957.35px;top:519.50px"><span class="n">8</span> <span class="u">个服务</span></div>
<div class="card" style="left:1418px;top:387px;width:486px;height:188px"></div>
<div class="div" style="left:1419px;top:501px;width:484px"></div>
<div class="logo" style="left:1444px;top:413px;height:63px"><svg class="lg" width="100%" height="100%" preserveAspectRatio="none" viewBox="0 0 63.5 63.5" style="overflow:visible;"><path d="M31.4 1.9 L48.6 16 V10 H55 V21.2 L61.3 26.4 H55.2 V55.8 A1.5 1.5 0 0 1 53.7 57.3 H10.1 A1.5 1.5 0 0 1 8.6 55.8 V26.4 H2 Z" fill="#ff9d12" stroke="#ff9d12" stroke-width="0.8" stroke-linejoin="round"/><path d="M31.5 7.2 L51 23 V53.3 H12.2 V23 Z" fill="#ffa81c" stroke="#ffa81c" stroke-width="1.5" stroke-linejoin="round"/><path d="M31.5 14 L45.6 25.6 V48.6 H17.5 V25.6 Z" fill="#ffb830" stroke="#ffb830" stroke-width="1.5" stroke-linejoin="round"/><path d="M31.5 20.3 L41 28.2 V43.7 H22 V28.2 Z" fill="#ffca48" stroke="#ffca48" stroke-width="1.5" stroke-linejoin="round"/><path d="M31.5 26.3 L36.8 30.7 V39 H26.3 V30.7 Z" fill="#ffe06a" stroke="#ffe06a" stroke-width="1.5" stroke-linejoin="round"/></svg></div>
<div class="ttl" style="left:1531.10px;top:425.60px;letter-spacing:0.159px">HomeKit Bridge</div>
<svg class="ic" style="left:1852.30px;top:426.05px;width:37.5px;height:37.5px;" viewBox="0 0 24 24"><path fill="#9b9b9b" d="M8.59,16.58L13.17,12L8.59,7.41L10,6L16,12L10,18L8.59,16.58Z"/></svg>
<div class="cnt cj" style="left:1456.10px;top:519.50px"><span class="n">2</span> <span class="u">个服务</span></div>
<div class="card" style="left:1916px;top:387px;width:487px;height:188px"></div>
<div class="div" style="left:1917px;top:501px;width:485px"></div>
<div class="logo" style="left:1942px;top:413px;height:63px"><svg class="lg" width="100%" height="100%" preserveAspectRatio="none" viewBox="0 0 63.5 63.5" style="overflow:visible;"><rect width="63.5" height="63.5" fill="#1b9ab5"/><circle cx="31.1" cy="23.6" r="12.4" fill="none" stroke="#fff" stroke-width="2.1"/><path d="M18.6 52.6 L23.3 48.3 L28.6 53.1 L33.9 48.3 L39.2 53.1 L44.3 48.3" fill="none" stroke="#fff" stroke-width="2.2" stroke-linecap="round" stroke-linejoin="miter"/></svg></div>
<div class="ttl" style="left:2029.85px;top:410.75px;letter-spacing:0.528px">Meteorologisk institutt</div>
<div class="ttl" style="left:2029.85px;top:441.25px;letter-spacing:0.386px">(Met.no)</div>
<svg class="ic" style="left:2351.05px;top:426.05px;width:37.5px;height:37.5px;" viewBox="0 0 24 24"><path fill="#9b9b9b" d="M8.59,16.58L13.17,12L8.59,7.41L10,6L16,12L10,18L8.59,16.58Z"/></svg>
<div class="cnt cj" style="left:1954.85px;top:519.50px"><span class="n">1</span> <span class="u">个服务</span></div>
<svg class="ic" style="left:2332.75px;top:518.55px;width:37.5px;height:37.5px;" viewBox="0 0 24 24"><path fill="#a3a3a3" d="M16.36,14C16.44,13.34 16.5,12.68 16.5,12C16.5,11.32 16.44,10.66 16.36,10H19.74C19.9,10.64 20,11.31 20,12C20,12.69 19.9,13.36 19.74,14M14.59,19.56C15.19,18.45 15.65,17.25 15.97,16H18.92C17.96,17.65 16.43,18.93 14.59,19.56M14.34,14H9.66C9.56,13.34 9.5,12.68 9.5,12C9.5,11.32 9.56,10.65 9.66,10H14.34C14.43,10.65 14.5,11.32 14.5,12C14.5,12.68 14.43,13.34 14.34,14M12,19.96C11.17,18.76 10.5,17.43 10.09,16H13.91C13.5,17.43 12.83,18.76 12,19.96M8,8H5.08C6.03,6.34 7.57,5.06 9.4,4.44C8.8,5.55 8.35,6.75 8,8M5.08,16H8C8.35,17.25 8.8,18.45 9.4,19.56C7.57,18.93 6.03,17.65 5.08,16M4.26,14C4.1,13.36 4,12.69 4,12C4,11.31 4.1,10.64 4.26,10H7.64C7.56,10.66 7.5,11.32 7.5,12C7.5,12.68 7.56,13.34 7.64,14M12,4.03C12.83,5.23 13.5,6.57 13.91,8H10.09C10.5,6.57 11.17,5.23 12,4.03M18.92,8H15.97C15.65,6.75 15.19,5.55 14.59,4.44C16.43,5.07 17.96,6.34 18.92,8M12,2C6.47,2 2,6.5 2,12A10,10 0 0,0 12,22A10,10 0 0,0 22,12A10,10 0 0,0 12,2Z"/></svg>
<div class="card" style="left:2415px;top:387px;width:486px;height:188px"></div>
<div class="div" style="left:2416px;top:501px;width:484px"></div>
<div class="logo" style="left:2441px;top:413px;height:63px"><svg class="lg" width="100%" height="100%" preserveAspectRatio="none" viewBox="0 0 63.5 63.5" style="overflow:visible;"><defs><clipPath id="mqc"><rect x="0.8" y="0.8" width="61.2" height="61.6" rx="2"/></clipPath></defs><g clip-path="url(#mqc)"><rect x="0" y="0" width="63.5" height="63.5" fill="#6a0072"/><circle cx="0.8" cy="62.4" r="31.6" fill="none" stroke="#1c1c1c" stroke-width="9"/><circle cx="0.8" cy="62.4" r="50" fill="none" stroke="#1c1c1c" stroke-width="9"/><circle cx="0.8" cy="62.4" r="68.5" fill="none" stroke="#1c1c1c" stroke-width="9"/></g></svg></div>
<div class="ttl" style="left:2528.60px;top:425.60px;letter-spacing:-0.826px">MQTT</div>
<svg class="ic" style="left:2849.80px;top:426.05px;width:37.5px;height:37.5px;" viewBox="0 0 24 24"><path fill="#9b9b9b" d="M8.59,16.58L13.17,12L8.59,7.41L10,6L16,12L10,18L8.59,16.58Z"/></svg>
<div class="cnt cj" style="left:2453.60px;top:519.50px"><span class="n">1</span> <span class="u">个条目</span></div>
<div class="card" style="left:2914px;top:387px;width:486px;height:188px"></div>
<div class="div" style="left:2915px;top:501px;width:484px"></div>
<div class="logo" style="left:2940px;top:413px;height:63px"><svg class="lg" width="100%" height="100%" preserveAspectRatio="none" viewBox="0 0 63.5 63.5" style="overflow:visible;"><defs><linearGradient id="nrg" x1="0" y1="0" x2="0" y2="1"><stop offset="0" stop-color="#9a0000"/><stop offset="1" stop-color="#7a0000"/></linearGradient></defs><path d="M31.4 0.3 L58.1 15.8 V47.9 L31.4 63.4 L4.7 47.9 V15.8 Z" fill="url(#nrg)" stroke="#a00d0d" stroke-width="1" stroke-linejoin="round"/><path d="M31.4 33 C38 38 40 39 44 38 H56.5 V47 L31.4 61.6 L6.4 47 V35 H18 C24 34 27 31 31.4 33 Z" fill="#7d0000"/><path d="M31.4 2.9 L55.9 17.1 V46.6 L31.4 60.8 L6.9 46.6 V17.1 Z" fill="none" stroke="#ffdcdc" stroke-width="1.4" stroke-linejoin="round"/><path d="M19 30.6 C24 30.6 23 23 31.4 22.8" fill="none" stroke="#ffe4e4" stroke-width="1.7"/><path d="M19 30.6 C30 30.6 32 38 43.5 38" fill="none" stroke="#ffe4e4" stroke-width="1.7"/><rect x="7" y="26.6" width="12" height="8.1" rx="2.4" fill="#980a0a" stroke="#ffe4e4" stroke-width="1.7"/><rect x="31.6" y="18.8" width="15.8" height="8.1" rx="2.4" fill="#980a0a" stroke="#ffe4e4" stroke-width="1.7"/><rect x="43.7" y="33.9" width="12" height="8.1" rx="2.4" fill="#980a0a" stroke="#ffe4e4" stroke-width="1.7"/></svg></div>
<div class="ttl" style="left:3027.35px;top:425.60px;letter-spacing:-0.307px">Node-RED Companion</div>
<svg class="ic" style="left:3348.55px;top:426.05px;width:37.5px;height:37.5px;" viewBox="0 0 24 24"><path fill="#9b9b9b" d="M8.59,16.58L13.17,12L8.59,7.41L10,6L16,12L10,18L8.59,16.58Z"/></svg>
<div class="cnt cj" style="left:2952.35px;top:519.50px"><span class="n">1</span> <span class="u">个实体</span></div>
<svg class="ic" style="left:3330.25px;top:518.55px;width:37.5px;height:37.5px;" viewBox="0 0 24 24"><path fill="#fdab16" d="M2,10.96C1.5,10.68 1.35,10.07 1.63,9.59L3.13,7C3.24,6.8 3.41,6.66 3.6,6.58L11.43,2.18C11.59,2.06 11.79,2 12,2C12.21,2 12.41,2.06 12.57,2.18L20.47,6.62C20.66,6.72 20.82,6.88 20.91,7.08L22.36,9.6C22.64,10.08 22.47,10.69 22,10.96L21,11.54V16.5C21,16.88 20.79,17.21 20.47,17.38L12.57,21.82C12.41,21.94 12.21,22 12,22C11.79,22 11.59,21.94 11.43,21.82L3.53,17.38C3.21,17.21 3,16.88 3,16.5V10.96C2.7,11.13 2.32,11.14 2,10.96M12,4.15V4.15L12,10.85V10.85L17.96,7.5L12,4.15M5,15.91L11,19.29V12.58L5,9.21V15.91M19,15.91V12.69L14,15.59C13.67,15.77 13.3,15.76 13,15.6V19.29L19,15.91M13.85,13.36L20.13,9.73L19.55,8.72L13.27,12.35L13.85,13.36Z"/></svg>
<div class="card" style="left:420px;top:587px;width:486px;height:188px"></div>
<div class="div" style="left:421px;top:701px;width:484px"></div>
<div class="logo" style="left:446px;top:613px;height:63px"><svg class="lg" width="100%" height="100%" preserveAspectRatio="none" viewBox="0 0 63.5 63.5" style="overflow:visible;"><defs><clipPath id="rbc"><ellipse cx="34.2" cy="38.3" rx="16.3" ry="17.4"/></clipPath></defs><ellipse cx="34.2" cy="38.3" rx="16.3" ry="17.4" fill="#3db4ee"/><g clip-path="url(#rbc)"><path d="M17 36 C17 26 22 20 30 21.5 L29 26 L24.5 28 L22 33 L24 38 L20 42 L17 42 Z" fill="#86e04e"/><path d="M31 20 L38 20.5 L37 26 L33 27 Z" fill="#a6e85a"/><path d="M43 24 L50 28 L51.5 44 L47 48 L42 44 L40 38 L44 34 L42 29 Z" fill="#7ddc46"/><path d="M27 50 L31 52 L30 57 L26 55 Z" fill="#86e04e"/></g><path d="M23.4 34.6 C24 30 29.4 30 30 34.6" fill="none" stroke="#14252e" stroke-width="1.9" stroke-linecap="round"/><path d="M37.4 34.6 C38 30 43.4 30 44 34.6" fill="none" stroke="#14252e" stroke-width="1.9" stroke-linecap="round"/><path d="M25.6 42.2 C28 46.5 38.5 46.8 41.6 42.4 C41.5 52 26 52.4 25.6 42.2 Z" fill="#14252e" stroke="#14252e" stroke-width="1" stroke-linejoin="round"/></svg></div>
<div class="ttl" style="left:533.60px;top:625.60px;letter-spacing:-0.082px">Radio Browser</div>
<svg class="ic" style="left:854.80px;top:626.05px;width:37.5px;height:37.5px;" viewBox="0 0 24 24"><path fill="#9b9b9b" d="M8.59,16.58L13.17,12L8.59,7.41L10,6L16,12L10,18L8.59,16.58Z"/></svg>
<div class="cnt cj" style="left:458.60px;top:719.50px"><span class="n">1</span> <span class="u">个条目</span></div>
<svg class="ic" style="left:836.50px;top:718.55px;width:37.5px;height:37.5px;" viewBox="0 0 24 24"><path fill="#a3a3a3" d="M16.36,14C16.44,13.34 16.5,12.68 16.5,12C16.5,11.32 16.44,10.66 16.36,10H19.74C19.9,10.64 20,11.31 20,12C20,12.69 19.9,13.36 19.74,14M14.59,19.56C15.19,18.45 15.65,17.25 15.97,16H18.92C17.96,17.65 16.43,18.93 14.59,19.56M14.34,14H9.66C9.56,13.34 9.5,12.68 9.5,12C9.5,11.32 9.56,10.65 9.66,10H14.34C14.43,10.65 14.5,11.32 14.5,12C14.5,12.68 14.43,13.34 14.34,14M12,19.96C11.17,18.76 10.5,17.43 10.09,16H13.91C13.5,17.43 12.83,18.76 12,19.96M8,8H5.08C6.03,6.34 7.57,5.06 9.4,4.44C8.8,5.55 8.35,6.75 8,8M5.08,16H8C8.35,17.25 8.8,18.45 9.4,19.56C7.57,18.93 6.03,17.65 5.08,16M4.26,14C4.1,13.36 4,12.69 4,12C4,11.31 4.1,10.64 4.26,10H7.64C7.56,10.66 7.5,11.32 7.5,12C7.5,12.68 7.56,13.34 7.64,14M12,4.03C12.83,5.23 13.5,6.57 13.91,8H10.09C10.5,6.57 11.17,5.23 12,4.03M18.92,8H15.97C15.65,6.75 15.19,5.55 14.59,4.44C16.43,5.07 17.96,6.34 18.92,8M12,2C6.47,2 2,6.5 2,12A10,10 0 0,0 12,22A10,10 0 0,0 22,12A10,10 0 0,0 12,2Z"/></svg>
<div class="card" style="left:919px;top:587px;width:486px;height:188px"></div>
<div class="div" style="left:920px;top:701px;width:484px"></div>
<div class="logo" style="left:945px;top:613px;height:63px"><svg class="lg" width="100%" height="100%" preserveAspectRatio="none" viewBox="0 0 63.5 63.5" style="overflow:visible;"><text x="4.2" y="35.7" font-family="Liberation Mono, monospace" font-weight="700" font-size="16" fill="#2cb67d" textLength="5" lengthAdjust="spacingAndGlyphs">{</text><text x="13.3" y="37.6" font-family="DejaVu Serif, serif" font-weight="400" font-size="16.7" fill="#2b93c2" stroke="#2b93c2" stroke-width="0.3" textLength="36.2" lengthAdjust="spacingAndGlyphs">REST</text><text x="55.2" y="35.7" font-family="Liberation Mono, monospace" font-weight="700" font-size="16" fill="#2cb67d" textLength="5" lengthAdjust="spacingAndGlyphs">}</text></svg></div>
<div class="ttl" style="left:1032.35px;top:625.60px;letter-spacing:-0.116px">RESTful Command</div>
<svg class="ic" style="left:1353.55px;top:626.05px;width:37.5px;height:37.5px;" viewBox="0 0 24 24"><path fill="#9b9b9b" d="M8.59,16.58L13.17,12L8.59,7.41L10,6L16,12L10,18L8.59,16.58Z"/></svg>
<svg class="ic" style="left:1335.25px;top:718.55px;width:37.5px;height:37.5px;" viewBox="0 0 24 24"><path fill="#a3a3a3" d="M14 2H6C4.89 2 4 2.9 4 4V20C4 21.11 4.89 22 6 22H18C19.11 22 20 21.11 20 20V8L14 2M18 20H6V4H13V9H18V20M9.54 15.65L11.63 17.74L10.35 19L7 15.65L10.35 12.3L11.63 13.56L9.54 15.65M17 15.65L13.65 19L12.38 17.74L14.47 15.65L12.38 13.56L13.65 12.3L17 15.65Z"/></svg>
<div class="card" style="left:1418px;top:587px;width:486px;height:188px"></div>
<div class="div" style="left:1419px;top:701px;width:484px"></div>
<div class="logo" style="left:1444px;top:613px;height:63px"><svg class="lg" width="100%" height="100%" preserveAspectRatio="none" viewBox="0 0 63.5 63.5" style="overflow:visible;"><g transform="translate(0,47.2) skewX(11.5) translate(0,-47.2)"><text x="15.3" y="47.2" font-family="Liberation Sans, sans-serif" font-weight="700" font-size="45" fill="#18acf3" stroke="#18acf3" stroke-width="1.2" textLength="27.5" lengthAdjust="spacingAndGlyphs">#</text></g><text x="39.6" y="47.2" font-family="Liberation Sans, sans-serif" font-weight="700" font-size="44" fill="#18acf3">!</text></svg></div>
<div class="ttl" style="left:1531.10px;top:625.60px;letter-spacing:0.138px">Shell Command</div>
<svg class="ic" style="left:1852.30px;top:626.05px;width:37.5px;height:37.5px;" viewBox="0 0 24 24"><path fill="#9b9b9b" d="M8.59,16.58L13.17,12L8.59,7.41L10,6L16,12L10,18L8.59,16.58Z"/></svg>
<svg class="ic" style="left:1834.00px;top:718.55px;width:37.5px;height:37.5px;" viewBox="0 0 24 24"><path fill="#a3a3a3" d="M14 2H6C4.89 2 4 2.9 4 4V20C4 21.11 4.89 22 6 22H18C19.11 22 20 21.11 20 20V8L14 2M18 20H6V4H13V9H18V20M9.54 15.65L11.63 17.74L10.35 19L7 15.65L10.35 12.3L11.63 13.56L9.54 15.65M17 15.65L13.65 19L12.38 17.74L14.47 15.65L12.38 13.56L13.65 12.3L17 15.65Z"/></svg>
<div class="card" style="left:1916px;top:587px;width:487px;height:188px"></div>
<div class="div" style="left:1917px;top:701px;width:485px"></div>
<div class="logo" style="left:1942px;top:613px;height:63px"><svg class="lg" width="100%" height="100%" preserveAspectRatio="none" viewBox="0 0 63.5 63.5" style="overflow:visible;"><circle cx="31.7" cy="31.6" r="23.1" fill="#fbf7e9" stroke="#231e55" stroke-width="1.5"/><rect x="11.7" y="11.600000000000001" width="40" height="40" rx="8" fill="#fbf7e9" stroke="#231e55" stroke-width="1.6" transform="rotate(45 31.7 31.6)"/><text x="12.0" y="36.5" font-family="DejaVu Serif, serif" font-weight="700" font-size="18.5" fill="#231e55" textLength="39.4" lengthAdjust="spacingAndGlyphs">var</text></svg></div>
<div class="ttl" style="left:2029.85px;top:625.60px;letter-spacing:0.184px">Variable</div>
<svg class="ic" style="left:2351.05px;top:626.05px;width:37.5px;height:37.5px;" viewBox="0 0 24 24"><path fill="#9b9b9b" d="M8.59,16.58L13.17,12L8.59,7.41L10,6L16,12L10,18L8.59,16.58Z"/></svg>
<div class="cnt cj" style="left:1954.85px;top:719.50px"><span class="n">65</span> <span class="u">个实体</span></div>
<svg class="ic" style="left:2332.75px;top:718.55px;width:37.5px;height:37.5px;" viewBox="0 0 24 24"><path fill="#a3a3a3" d="M14 2H6C4.89 2 4 2.9 4 4V20C4 21.11 4.89 22 6 22H18C19.11 22 20 21.11 20 20V8L14 2M18 20H6V4H13V9H18V20M9.54 15.65L11.63 17.74L10.35 19L7 15.65L10.35 12.3L11.63 13.56L9.54 15.65M17 15.65L13.65 19L12.38 17.74L14.47 15.65L12.38 13.56L13.65 12.3L17 15.65Z"/></svg>
<svg class="ic" style="left:2269.75px;top:718.55px;width:37.5px;height:37.5px;" viewBox="0 0 24 24"><path fill="#fdab16" d="M2,10.96C1.5,10.68 1.35,10.07 1.63,9.59L3.13,7C3.24,6.8 3.41,6.66 3.6,6.58L11.43,2.18C11.59,2.06 11.79,2 12,2C12.21,2 12.41,2.06 12.57,2.18L20.47,6.62C20.66,6.72 20.82,6.88 20.91,7.08L22.36,9.6C22.64,10.08 22.47,10.69 22,10.96L21,11.54V16.5C21,16.88 20.79,17.21 20.47,17.38L12.57,21.82C12.41,21.94 12.21,22 12,22C11.79,22 11.59,21.94 11.43,21.82L3.53,17.38C3.21,17.21 3,16.88 3,16.5V10.96C2.7,11.13 2.32,11.14 2,10.96M12,4.15V4.15L12,10.85V10.85L17.96,7.5L12,4.15M5,15.91L11,19.29V12.58L5,9.21V15.91M19,15.91V12.69L14,15.59C13.67,15.77 13.3,15.76 13,15.6V19.29L19,15.91M13.85,13.36L20.13,9.73L19.55,8.72L13.27,12.35L13.85,13.36Z"/></svg>
<div class="card" style="left:2415px;top:587px;width:486px;height:188px"></div>
<div class="div" style="left:2416px;top:701px;width:484px"></div>
<div class="logo" style="left:2441px;top:613px;height:63px"><svg class="lg" width="100%" height="100%" preserveAspectRatio="none" viewBox="0 0 63.5 63.5" style="overflow:visible;"><path d="M63.5 31.8 L63.4 39.0 L63.2 42.7 L62.8 45.7 L62.3 48.3 L61.7 50.6 L60.8 52.6 L59.9 54.4 L58.8 56.0 L57.5 57.5 L56.0 58.8 L54.4 59.9 L52.6 60.8 L50.6 61.7 L48.3 62.3 L45.7 62.8 L42.7 63.2 L39.0 63.4 L31.8 63.5 L24.5 63.4 L20.8 63.2 L17.8 62.8 L15.2 62.3 L12.9 61.7 L10.9 60.8 L9.1 59.9 L7.5 58.8 L6.0 57.5 L4.7 56.0 L3.6 54.4 L2.7 52.6 L1.8 50.6 L1.2 48.3 L0.7 45.7 L0.3 42.7 L0.1 39.0 L0.0 31.8 L0.1 24.5 L0.3 20.8 L0.7 17.8 L1.2 15.2 L1.8 12.9 L2.7 10.9 L3.6 9.1 L4.7 7.5 L6.0 6.0 L7.5 4.7 L9.1 3.6 L10.9 2.7 L12.9 1.8 L15.2 1.2 L17.8 0.7 L20.8 0.3 L24.5 0.1 L31.7 0.0 L39.0 0.1 L42.7 0.3 L45.7 0.7 L48.3 1.2 L50.6 1.8 L52.6 2.7 L54.4 3.6 L56.0 4.7 L57.5 6.0 L58.8 7.5 L59.9 9.1 L60.8 10.9 L61.7 12.9 L62.3 15.2 L62.8 17.8 L63.2 20.8 L63.4 24.5 Z" fill="#ff6f00"/><path d="M12.4 19.7 H31.2 C36.8 19.7 39.2 22.4 39.2 27.4 V43.5 H33.5 V28.6 C33.5 26 32.4 25 29.8 25 H18.1 V43.5 H12.4 Z" fill="#fff"/><rect x="23" y="30" width="5.6" height="13.5" fill="#fff"/><rect x="44.3" y="19.7" width="5.8" height="23.8" fill="#fff"/></svg></div>
<div class="ttl" style="left:2528.60px;top:625.60px;letter-spacing:0.259px">Xiaomi Home</div>
<svg class="ic" style="left:2849.80px;top:626.05px;width:37.5px;height:37.5px;" viewBox="0 0 24 24"><path fill="#9b9b9b" d="M8.59,16.58L13.17,12L8.59,7.41L10,6L16,12L10,18L8.59,16.58Z"/></svg>
<div class="cnt cj" style="left:2453.60px;top:719.50px"><span class="n">80</span> <span class="u">个设备</span></div>
<svg class="ic" style="left:2831.50px;top:718.55px;width:37.5px;height:37.5px;" viewBox="0 0 24 24"><path fill="#a3a3a3" d="M16.36,14C16.44,13.34 16.5,12.68 16.5,12C16.5,11.32 16.44,10.66 16.36,10H19.74C19.9,10.64 20,11.31 20,12C20,12.69 19.9,13.36 19.74,14M14.59,19.56C15.19,18.45 15.65,17.25 15.97,16H18.92C17.96,17.65 16.43,18.93 14.59,19.56M14.34,14H9.66C9.56,13.34 9.5,12.68 9.5,12C9.5,11.32 9.56,10.65 9.66,10H14.34C14.43,10.65 14.5,11.32 14.5,12C14.5,12.68 14.43,13.34 14.34,14M12,19.96C11.17,18.76 10.5,17.43 10.09,16H13.91C13.5,17.43 12.83,18.76 12,19.96M8,8H5.08C6.03,6.34 7.57,5.06 9.4,4.44C8.8,5.55 8.35,6.75 8,8M5.08,16H8C8.35,17.25 8.8,18.45 9.4,19.56C7.57,18.93 6.03,17.65 5.08,16M4.26,14C4.1,13.36 4,12.69 4,12C4,11.31 4.1,10.64 4.26,10H7.64C7.56,10.66 7.5,11.32 7.5,12C7.5,12.68 7.56,13.34 7.64,14M12,4.03C12.83,5.23 13.5,6.57 13.91,8H10.09C10.5,6.57 11.17,5.23 12,4.03M18.92,8H15.97C15.65,6.75 15.19,5.55 14.59,4.44C16.43,5.07 17.96,6.34 18.92,8M12,2C6.47,2 2,6.5 2,12A10,10 0 0,0 12,22A10,10 0 0,0 22,12A10,10 0 0,0 12,2Z"/></svg>
<svg class="ic" style="left:2768.50px;top:718.55px;width:37.5px;height:37.5px;" viewBox="0 0 24 24"><path fill="#fdab16" d="M2,10.96C1.5,10.68 1.35,10.07 1.63,9.59L3.13,7C3.24,6.8 3.41,6.66 3.6,6.58L11.43,2.18C11.59,2.06 11.79,2 12,2C12.21,2 12.41,2.06 12.57,2.18L20.47,6.62C20.66,6.72 20.82,6.88 20.91,7.08L22.36,9.6C22.64,10.08 22.47,10.69 22,10.96L21,11.54V16.5C21,16.88 20.79,17.21 20.47,17.38L12.57,21.82C12.41,21.94 12.21,22 12,22C11.79,22 11.59,21.94 11.43,21.82L3.53,17.38C3.21,17.21 3,16.88 3,16.5V10.96C2.7,11.13 2.32,11.14 2,10.96M12,4.15V4.15L12,10.85V10.85L17.96,7.5L12,4.15M5,15.91L11,19.29V12.58L5,9.21V15.91M19,15.91V12.69L14,15.59C13.67,15.77 13.3,15.76 13,15.6V19.29L19,15.91M13.85,13.36L20.13,9.73L19.55,8.72L13.27,12.35L13.85,13.36Z"/></svg>
<div id="fab">
<svg class="ic" style="left:19.75px;top:19.25px;width:37.5px;height:37.5px;" viewBox="0 0 24 24"><path fill="#ffffff" d="M19,13H13V19H11V13H5V11H11V5H13V11H19V13Z"/></svg>
<span class="cj">添加集成</span></div>
</body></html>
